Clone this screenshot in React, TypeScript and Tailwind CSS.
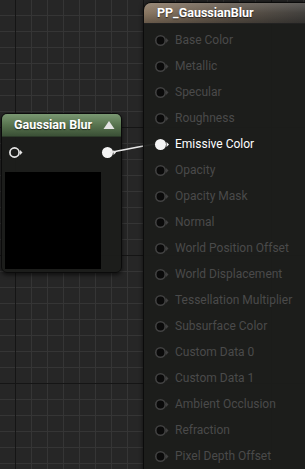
import React from "react";

const pins = [
  "Base Color",
  "Metallic",
  "Specular",
  "Roughness",
  "Emissive Color",
  "Opacity",
  "Opacity Mask",
  "Normal",
  "World Position Offset",
  "World Displacement",
  "Tessellation Multiplier",
  "Subsurface Color",
  "Custom Data 0",
  "Custom Data 1",
  "Ambient Occlusion",
  "Refraction",
  "Pixel Depth Offset",
];

function Pin({ on, hollow }: { on?: boolean; hollow?: boolean }) {
  if (on) {
    return (
      <svg width="17" height="13" viewBox="0 0 17 13">
        <circle cx="6.5" cy="6.5" r="5.5" fill="#f4f4f4" />
        <path d="M12.5 4 L15 6.5 L12.5 9 Z" fill="#f4f4f4" />
      </svg>
    );
  }
  if (hollow) {
    return (
      <svg width="17" height="13" viewBox="0 0 17 13">
        <circle cx="6.5" cy="6.5" r="4.6" fill="none" stroke="#e6e6e6" strokeWidth="1.7" />
        <path d="M12 4 L14.5 6.5 L12 9 Z" fill="#e6e6e6" />
      </svg>
    );
  }
  return (
    <svg width="17" height="13" viewBox="0 0 17 13">
      <circle cx="6.5" cy="6.5" r="4.7" fill="#0a0a0a" stroke="#414141" strokeWidth="1.6" />
      <path d="M12 4 L14.5 6.5 L12 9 Z" fill="#414141" />
    </svg>
  );
}

function Grid() {
  return (
    <svg className="absolute inset-0" width="305" height="469">
      <defs>
        <pattern id="minor" x="15" y="15" width="16" height="16" patternUnits="userSpaceOnUse">
          <path d="M0 0.5 H16 M0.5 0 V16" stroke="#353535" strokeWidth="1" />
        </pattern>
        <pattern id="major" x="15" y="127" width="128" height="128" patternUnits="userSpaceOnUse">
          <path d="M0 0.5 H128 M0.5 0 V128" stroke="#151515" strokeWidth="1" />
        </pattern>
      </defs>
      <rect width="305" height="469" fill="url(#minor)" />
      <rect width="305" height="469" fill="url(#major)" />
    </svg>
  );
}

export default function App() {
  return (
    <div className="relative w-[305px] h-[469px] overflow-hidden bg-[#262626] font-['Roboto',sans-serif]">
      <Grid />

      {/* Gaussian Blur node */}
      <div className="absolute left-[1px] top-[113px] w-[121px] h-[160px] rounded-md border border-[#0b0b0b] bg-[#1b1c1a]/95 shadow-[0_2px_4px_rgba(0,0,0,0.6)] overflow-hidden flex flex-col">
        <div className="h-[23px] flex items-center justify-between pl-3 pr-[6px] bg-gradient-to-b from-[#7a9872] via-[#58744f] to-[#3b5036] border-b border-[#2c3a29]">
          <span className="text-white font-bold text-[12.5px] leading-none [text-shadow:0_1px_1px_rgba(0,0,0,0.6)]">
            Gaussian Blur
          </span>
          <svg width="12" height="10" viewBox="0 0 12 10">
            <path d="M0.5 9 L6 1 L11.5 9 Z" fill="#e4e4e4" />
          </svg>
        </div>
        <div className="h-[35px] flex items-center justify-between pl-[6px] pr-[3px] pb-[4px]">
          <Pin hollow />
          <Pin on />
        </div>
        <div className="ml-[3px] w-[96px] h-[97px] bg-black" />
      </div>

      {/* wire */}
      <svg className="absolute inset-0 pointer-events-none" width="305" height="469">
        <path d="M110 152.5 C126 150, 140 146, 156 144" stroke="#e8e8e8" strokeWidth="1.5" fill="none" />
      </svg>

      {/* Material result node */}
      <div className="absolute left-[143px] top-[2px] w-[175px] h-[480px] rounded-t-lg border border-[#0b0b0b] bg-[#1b1c1a]/95 shadow-[0_0_4px_rgba(0,0,0,0.6)] overflow-hidden flex flex-col">
        <div className="relative h-[21px] flex items-center pl-[13px] bg-gradient-to-r from-[#8a7762] via-[#5f554a] to-[#3e3d3b] border-b border-[#222]">
          <div className="absolute inset-0 bg-gradient-to-b from-white/15 via-transparent to-black/25" />
          <span className="relative text-white font-bold text-[12.5px] leading-none [text-shadow:0_1px_1px_rgba(0,0,0,0.6)]">
            PP_GaussianBlur
          </span>
        </div>
        <div className="flex flex-col pt-[3px]">
          {pins.map((p, i) => {
            const on = i === 4;
            return (
              <div key={p} className="h-[26px] flex items-center pl-[10px] gap-[4px]">
                <Pin on={on} />
                <span
                  className={`text-[12px] leading-none whitespace-nowrap ${on ? "text-white" : "text-[#4a4a4a]"}`}
                >
                  {p}
                </span>
              </div>
            );
          })}
        </div>
      </div>
    </div>
  );
}
